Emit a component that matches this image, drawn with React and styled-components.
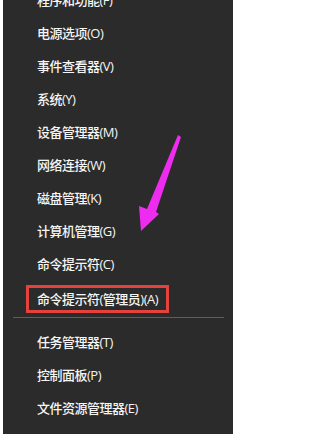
import React from 'react';
import styled, { createGlobalStyle } from 'styled-components';

const GlobalStyle = createGlobalStyle`
  html, body {
    margin: 0;
    padding: 0;
    background: #ffffff;
    overflow: hidden;
  }
`;

const Panel = styled.div`
  position: relative;
  margin-left: 3px;
  width: 230px;
  height: 434px;
  background: #2b2b2b;
  overflow: hidden;
  font-family: 'Open Sans', 'Noto Sans CJK SC', sans-serif;
  font-size: 13px;
  font-weight: 500;
  letter-spacing: -0.5px;
  color: #f6f6f6;
`;

const List = styled.ul`
  list-style: none;
  margin: -16px 0 0;
  padding: 0;
`;

const Item = styled.li`
  height: 33px;
  line-height: 33px;
  padding-left: 34px;
  white-space: nowrap;
`;

const Highlight = styled.span`
  display: inline-block;
  box-sizing: border-box;
  height: 28px;
  line-height: 22px;
  margin-left: -11px;
  padding: 0 8px;
  border: 3px solid #e5413d;
  vertical-align: middle;
`;

const Separator = styled.li`
  height: 9px;
  padding: 0 9px 0 10px;

  &::before {
    content: '';
    display: block;
    margin-top: 3px;
    height: 1px;
    background: #5e5e5e;
  }
`;

const Arrow = styled.svg`
  position: absolute;
  left: -3px;
  top: 0;
  pointer-events: none;
`;

const topItems = [
  '程序和功能(F)',
  '电源选项(O)',
  '事件查看器(V)',
  '系统(Y)',
  '设备管理器(M)',
  '网络连接(W)',
  '磁盘管理(K)',
  '计算机管理(G)',
  '命令提示符(C)',
];

const bottomItems = ['任务管理器(T)', '控制面板(P)', '文件资源管理器(E)', '搜索(S)'];

export default function App() {
  return (
    <>
      <GlobalStyle />
      <Panel>
        <List>
          {topItems.map((label) => (
            <Item key={label}>{label}</Item>
          ))}
          <Item>
            <Highlight>命令提示符(管理员)(A)</Highlight>
          </Item>
          <Separator />
          {bottomItems.map((label) => (
            <Item key={label}>{label}</Item>
          ))}
        </List>
        <Arrow width="238" height="434" viewBox="0 0 238 434">
          <polygon
            points="178,135 181,137 156,212 159,214 141,231 139,206 147,209"
            fill="#ee2cf0"
          />
        </Arrow>
      </Panel>
    </>
  );
}
